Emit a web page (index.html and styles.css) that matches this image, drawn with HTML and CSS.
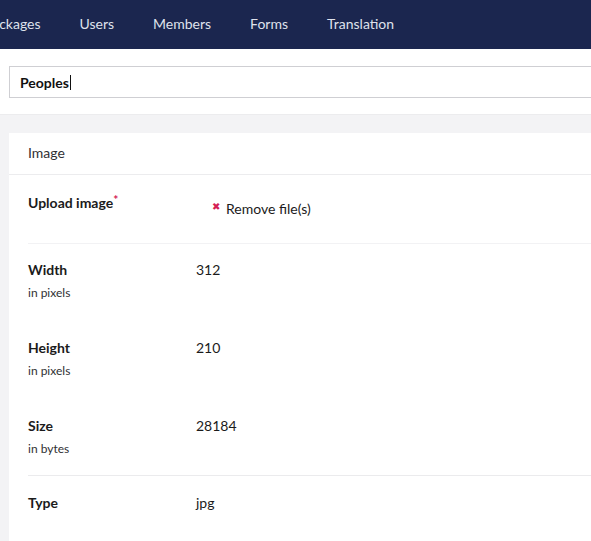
FILE: index.html
```html
<!DOCTYPE html>
<html>
<head>
<meta charset="utf-8">
<link rel="stylesheet" href="styles.css">
</head>
<body>
<nav class="topnav">
  <ul class="nav-list">
    <li>Packages</li>
    <li>Users</li>
    <li>Members</li>
    <li>Forms</li>
    <li>Translation</li>
  </ul>
</nav>
<header class="editor-header">
  <div class="name-input"><span class="name-text">Peoples</span><span class="caret"></span></div>
</header>
<main class="editor-body">
  <section class="panel">
    <div class="panel-header">Image</div>
    <div class="panel-body">
      <div class="prop prop-upload">
        <div class="prop-label"><span class="label-text">Upload image</span><span class="req">*</span></div>
        <div class="prop-value upload-value">
          <span class="remove-icon">✖</span><span class="remove-text">Remove file(s)</span>
        </div>
      </div>
      <div class="prop">
        <div class="prop-label"><div class="label-text">Width</div><div class="label-desc">in pixels</div></div>
        <div class="prop-value">312</div>
      </div>
      <div class="prop">
        <div class="prop-label"><div class="label-text">Height</div><div class="label-desc">in pixels</div></div>
        <div class="prop-value">210</div>
      </div>
      <div class="prop prop-size">
        <div class="prop-label"><div class="label-text">Size</div><div class="label-desc">in bytes</div></div>
        <div class="prop-value">28184</div>
      </div>
      <div class="prop prop-type">
        <div class="prop-label"><div class="label-text">Type</div></div>
        <div class="prop-value">jpg</div>
      </div>
    </div>
  </section>
</main>
</body>
</html>
```
FILE: styles.css
```css
html, body {
  margin: 0;
  padding: 0;
  overflow: hidden;
  background: #ffffff;
  font-family: Lato, "Open Sans", sans-serif;
  color: #1b1b1b;
}

.topnav {
  height: 49px;
  background: #1b264f;
  display: flex;
  align-items: center;
  overflow: hidden;
}

.nav-list {
  list-style: none;
  margin: 0 0 2px -16px;
  padding: 0;
  display: flex;
  gap: 39px;
  font-size: 14px;
  color: #dfe2ec;
  white-space: nowrap;
}

.editor-header {
  padding: 17px 0 16px 9px;
}

.name-input {
  height: 30px;
  border: 1px solid #cfcfd3;
  border-right: none;
  display: flex;
  align-items: center;
  padding-left: 10px;
  box-sizing: content-box;
  font-size: 14px;
  font-weight: 700;
  color: #111;
}

.caret {
  display: inline-block;
  width: 1px;
  height: 15px;
  background: #111;
  margin-left: 1px;
}

.editor-body {
  border-top: 1px solid #ececee;
  background: #f3f3f5;
  padding: 18px 0 0 9px;
  min-height: 420px;
}

.panel {
  background: #ffffff;
  min-height: 420px;
}

.panel-header {
  height: 20px;
  padding: 10px 19px 11px;
  line-height: 20px;
  font-size: 14px;
  color: #303033;
  border-bottom: 1px solid #ececee;
}

.panel-body {
  padding-left: 19px;
}

.prop {
  display: grid;
  grid-template-columns: 168px 1fr;
  padding: 16px 0 20px;
}

.prop-label .label-text {
  font-size: 14px;
  font-weight: 700;
  line-height: 20px;
  color: #1b1b1b;
}

.label-desc {
  font-size: 12px;
  line-height: 18px;
  margin-top: 4px;
  color: #303033;
}

.prop-value {
  font-size: 14px;
  line-height: 20px;
  color: #1b1b1b;
}

.prop-upload {
  padding: 17px 0 24px;
  border-bottom: 1px solid #f2f2f4;
}

.req {
  color: #d42054;
  font-size: 12px;
  font-weight: 700;
  position: relative;
  top: -4px;
  line-height: 0;
}

.upload-value {
  padding-top: 7px;
  padding-left: 16px;
  display: flex;
  align-items: center;
}

.remove-icon {
  color: #d42054;
  font-size: 10px;
  margin-right: 6px;
  position: relative;
  top: -3px;
}

.prop-size {
  padding-bottom: 17px;
  border-bottom: 1px solid #ebebed;
}

.prop-type {
  padding-top: 17px;
}
```
